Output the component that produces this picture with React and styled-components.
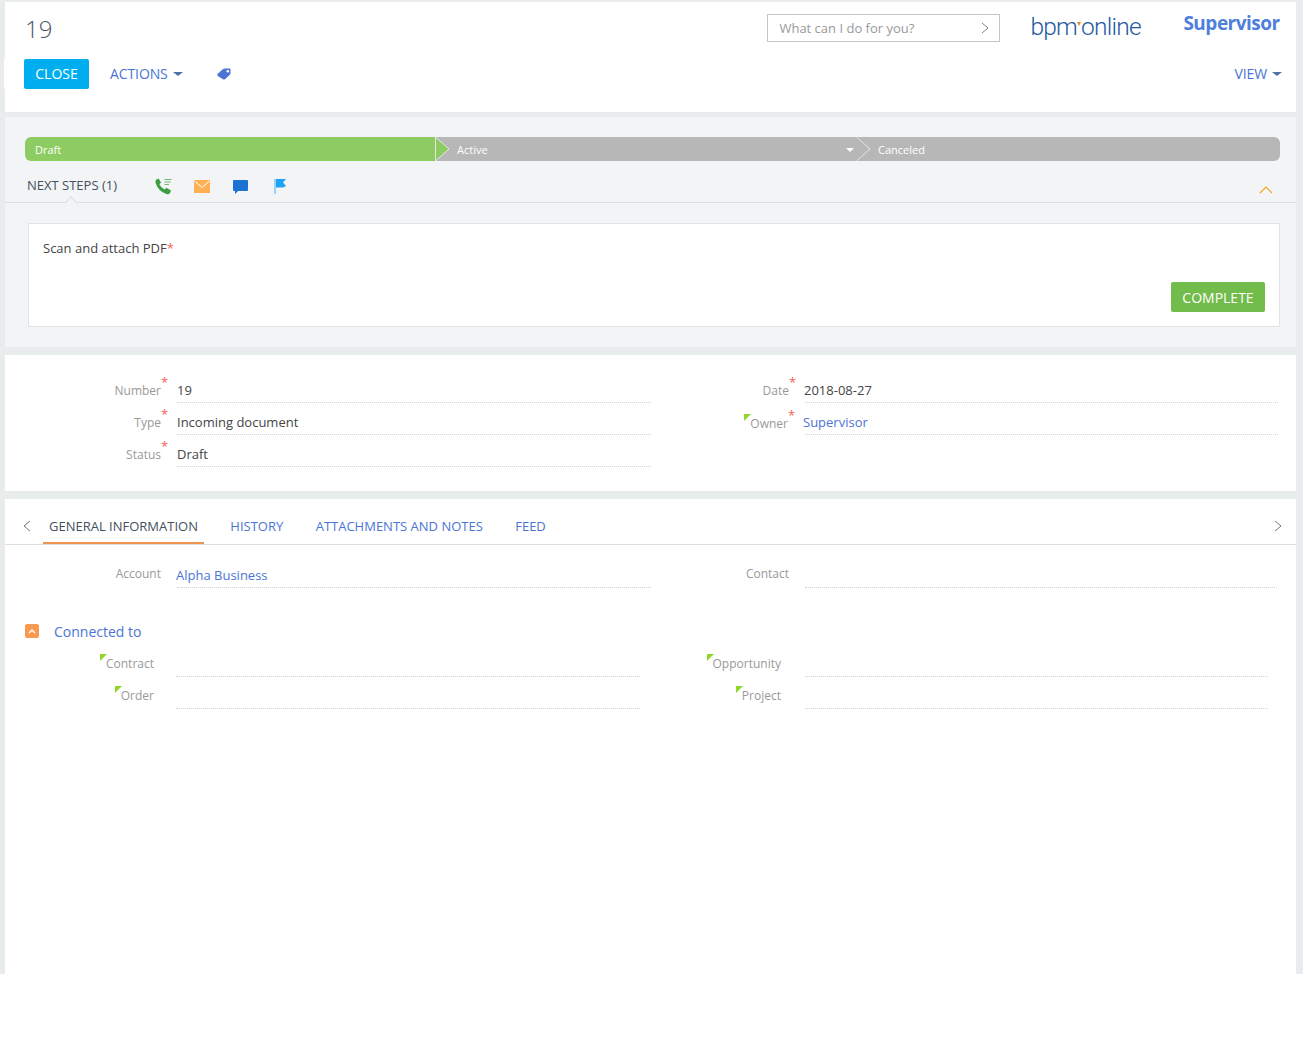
import styled, { createGlobalStyle } from 'styled-components'

const GlobalStyle = createGlobalStyle`
  html, body {
    margin: 0;
    padding: 0;
    background: #fff;
    font-family: "Open Sans", "Liberation Sans", sans-serif;
  }
`

const STAGES = [
  { name: 'Draft', width: 410, done: true },
  { name: 'Active', width: 421, menu: true },
  { name: 'Canceled', width: 424 },
]

const TABS = ['GENERAL INFORMATION', 'HISTORY', 'ATTACHMENTS AND NOTES', 'FEED']

function Chevron({ dir = 'right', color = '#777', size = 12, weight = 1 }) {
  const points = {
    right: '3,1 9,6 3,11',
    left: '9,1 3,6 9,11',
    up: '1,8 7,2 13,8',
  }[dir]
  return (
    <svg width={dir === 'up' ? 14 : size} height={size} viewBox={`0 0 ${dir === 'up' ? 14 : 12} 12`}>
      <polyline points={points} fill="none" stroke={color} strokeWidth={weight} />
    </svg>
  )
}

function StageArrow({ done }) {
  return (
    <ArrowSvg width="15" height="24" viewBox="0 0 15 24">
      {done && <polygon points="0,0 14,12 0,24" fill="#8ccc62" />}
      {done && <line x1="0.5" y1="0" x2="0.5" y2="24" stroke="#e6e6e6" />}
      <polyline points="0.5,0 14,12 0.5,24" fill="none" stroke="#e6e6e6" />
    </ArrowSvg>
  )
}

function TagIcon() {
  return (
    <svg width="14" height="12" viewBox="0 0 14 12">
      <path d="M0.5 6 L5.5 1.5 Q6.5 0.5 8 0.5 L12.5 0.5 Q13.5 0.5 13.5 1.5 L13.5 5 Q13.5 6 12.8 6.8 L8 11.2 Q7 12 6 11.2 L0.8 8 Q0 7 0.5 6 Z" fill="#4b74d4" />
      <circle cx="10.8" cy="3.2" r="1.3" fill="#fff" />
    </svg>
  )
}

function PhoneIcon() {
  return (
    <svg width="17" height="17" viewBox="0 0 17 17">
      <path d="M1 1.8 L3.6 0.6 L6 4.6 L4.4 6.2 Q5.8 9.6 9.6 11.4 L11.4 9.8 L16 12.6 L14.8 15.4 Q13.6 16.6 11.4 16 Q3.4 13.4 0.6 5 Q0.2 3 1 1.8 Z" fill="#3d9e3f" />
      <path d="M9.5 1.5 H16.5 M9.5 4 H15.5 M9.5 6.5 H14" stroke="#6dbb6e" strokeWidth="1" />
    </svg>
  )
}

function MailIcon() {
  return (
    <svg width="16" height="13" viewBox="0 0 16 13">
      <rect width="16" height="13" fill="#ffb053" />
      <polyline points="0.5,1 8,7.5 15.5,1" fill="none" stroke="#fff" strokeWidth="1" />
    </svg>
  )
}

function ChatIcon() {
  return (
    <svg width="15" height="14" viewBox="0 0 15 14">
      <path d="M1 0 H14 Q15 0 15 1 V10 Q15 11 14 11 H5 L2 14 V11 H1 Q0 11 0 10 V1 Q0 0 1 0 Z" fill="#1a73d3" />
    </svg>
  )
}

function FlagIcon() {
  return (
    <svg width="12" height="15" viewBox="0 0 12 15">
      <rect width="2" height="15" fill="#9ad2fb" />
      <path d="M2 0 H12 L9 3.5 L12 7 L9 8.5 H2 Z" fill="#1ea3f6" />
    </svg>
  )
}

function Field({ label, value, link, required, locked, labelWidth, valueWidth, labelTop = 6, labelGap = 16, indent = 0 }) {
  return (
    <FieldRow>
      <FieldLabel $width={labelWidth} $top={labelTop} $gap={labelGap}>
        <LabelText $locked={locked}>
          {label}
          {required && <Required>*</Required>}
        </LabelText>
      </FieldLabel>
      <FieldValue $width={valueWidth} $link={link} $indent={indent}>{value}</FieldValue>
    </FieldRow>
  )
}

export default function App() {
  return (
    <>
      <GlobalStyle />
      <Page>
        <Header>
          <TopRow>
            <Title>19</Title>
            <CommandBox>
              <span>What can I do for you?</span>
              <Chevron color="#808080" />
            </CommandBox>
            <Logo>
              bpm<LogoMark />online
            </Logo>
            <UserName>Supervisor</UserName>
          </TopRow>
          <ActionRow>
            <CloseButton>CLOSE</CloseButton>
            <MenuLink>ACTIONS<Caret /></MenuLink>
            <TagButton><TagIcon /></TagButton>
            <ViewLink>VIEW<Caret /></ViewLink>
          </ActionRow>
        </Header>

        <ProcessPanel>
          <StageBar>
            {STAGES.map((stage, i) => (
              <Stage key={stage.name} $width={stage.width} $done={stage.done}>
                {i > 0 && <StageArrow done={STAGES[i - 1].done} />}
                <StageName $first={i === 0}>{stage.name}</StageName>
                {stage.menu && <StageCaret />}
              </Stage>
            ))}
          </StageBar>
          <StepsBar>
            <StepsTitle>NEXT STEPS (1)</StepsTitle>
            <StepIcons>
              <StepIcon $gap={0}><PhoneIcon /></StepIcon>
              <StepIcon $gap={22}><MailIcon /></StepIcon>
              <StepIcon $gap={23}><ChatIcon /></StepIcon>
              <StepIcon $gap={26}><FlagIcon /></StepIcon>
            </StepIcons>
            <Collapse><Chevron dir="up" color="#f5a623" weight={1.2} /></Collapse>
            <Notch />
          </StepsBar>
          <StepCard>
            <StepText>Scan and attach PDF<StepStar>*</StepStar></StepText>
            <CompleteButton>COMPLETE</CompleteButton>
          </StepCard>
        </ProcessPanel>

        <FormPanel>
          <FormColumn $width={646}>
            <Field label="Number" value="19" required labelWidth={156} valueWidth={474} />
            <Field label="Type" value="Incoming document" required labelWidth={156} valueWidth={474} />
            <Field label="Status" value="Draft" required labelWidth={156} valueWidth={474} />
          </FormColumn>
          <FormColumn $width={640}>
            <Field label="Date" value="2018-08-27" required labelWidth={138} valueWidth={473} indent={-1} />
            <Field label="Owner" value="Supervisor" link required locked labelWidth={137} labelGap={17} valueWidth={473} labelTop={7} indent={-2} />
          </FormColumn>
        </FormPanel>

        <TabsPanel>
          <TabBar>
            <TabArrow><Chevron dir="left" /></TabArrow>
            <TabList>
              {TABS.map((tab, i) => (
                <Tab key={tab} $active={i === 0}>{tab}</Tab>
              ))}
            </TabList>
            <TabArrow><Chevron /></TabArrow>
          </TabBar>

          <AccountRow>
            <FormColumn $width={646}>
              <Field label="Account" value="Alpha Business" link labelWidth={156} valueWidth={474} labelTop={4} indent={-1} />
            </FormColumn>
            <FormColumn $width={640}>
              <Field label="Contact" labelWidth={138} valueWidth={472} labelTop={4} />
            </FormColumn>
          </AccountRow>

          <GroupHeader>
            <GroupToggle>
              <svg width="8" height="5" viewBox="0 0 8 5">
                <polyline points="1,4 4,1 7,4" fill="none" stroke="#fff" strokeWidth="1.4" />
              </svg>
            </GroupToggle>
            <GroupTitle>Connected to</GroupTitle>
          </GroupHeader>

          <GroupFields>
            <FormColumn $width={646}>
              <Field label="Contract" locked labelWidth={149} labelGap={22} valueWidth={464} labelTop={5} />
              <Field label="Order" locked labelWidth={149} labelGap={22} valueWidth={464} labelTop={5} />
            </FormColumn>
            <FormColumn $width={640}>
              <Field label="Opportunity" locked labelWidth={130} labelGap={24} valueWidth={463} labelTop={5} />
              <Field label="Project" locked labelWidth={130} labelGap={24} valueWidth={463} labelTop={5} />
            </FormColumn>
          </GroupFields>
        </TabsPanel>
      </Page>
    </>
  )
}

const Page = styled.div`
  width: 1303px;
  height: 974px;
  box-sizing: border-box;
  padding: 2px 7px 0 5px;
  background: #e9eced;
  display: flex;
  flex-direction: column;
  overflow: hidden;
`

const Header = styled.header`
  height: 110px;
  flex: none;
  background: #fff;
`

const TopRow = styled.div`
  height: 57px;
  display: flex;
  align-items: flex-start;
`

const Title = styled.h1`
  margin: 10px 0 0 20px;
  font-size: 24px;
  line-height: 34px;
  font-weight: 300;
  color: #4a5568;
`

const CommandBox = styled.div`
  width: 233px;
  height: 28px;
  box-sizing: border-box;
  margin: 12px 0 0 715px;
  padding: 0 8px 0 11px;
  border: 1px solid #c6c6c6;
  display: flex;
  align-items: center;
  justify-content: space-between;
  font-size: 13px;
  color: #999;
`

const Logo = styled.div`
  margin: 9px 0 0 30px;
  width: 115px;
  display: flex;
  align-items: flex-start;
  font-family: Roboto, "Open Sans", sans-serif;
  font-size: 24.5px;
  line-height: 32px;
  font-weight: 300;
  letter-spacing: -0.75px;
  color: #1f5a9e;
`

const LogoMark = styled.i`
  width: 0;
  height: 0;
  margin: 11px 0 0 0;
  border-style: solid;
  border-width: 4px 2px 0;
  border-color: #f58220 transparent transparent;
`

const UserName = styled.div`
  margin: 6px 0 0 38px;
  font-size: 19px;
  line-height: 30px;
  font-weight: 700;
  letter-spacing: -0.5px;
  color: #4f7fdc;
`

const ActionRow = styled.div`
  height: 30px;
  margin-left: -1px;
  padding: 0 14px 0 20px;
  background: #fff;
  display: flex;
  align-items: center;
  font-size: 14px;
`

const CloseButton = styled.button`
  width: 65px;
  height: 30px;
  padding: 0 0 2px;
  border: 0;
  border-radius: 2px;
  background: #00aeef;
  color: #fff;
  font: inherit;
`

const MenuLink = styled.span`
  margin: -2px 0 0 21px;
  letter-spacing: -0.1px;
  color: #4b74d4;
  display: flex;
  align-items: center;
`

const ViewLink = styled(MenuLink)`
  margin-left: auto;
`

const Caret = styled.i`
  margin: 1px 0 0 5px;
  width: 0;
  height: 0;
  border-style: solid;
  border-width: 4px 5px 0;
  border-color: #4f6fa8 transparent transparent;
`

const TagButton = styled.span`
  margin-left: 34px;
  display: flex;
`

const ProcessPanel = styled.section`
  height: 230px;
  flex: none;
  margin-top: 5px;
  padding-top: 20px;
  box-sizing: border-box;
  background: #f2f4f6;
`

const StageBar = styled.div`
  margin-left: 20px;
  width: 1255px;
  height: 24px;
  border-radius: 6px;
  overflow: hidden;
  display: flex;
`

const Stage = styled.div`
  position: relative;
  width: ${(p) => p.$width}px;
  flex: none;
  display: flex;
  align-items: center;
  background: ${(p) => (p.$done ? '#8ccc62' : '#b7b7b7')};
`

const StageName = styled.span`
  margin-left: ${(p) => (p.$first ? 10 : 22)}px;
  font-size: 11px;
  color: #fff;
`

const ArrowSvg = styled.svg`
  position: absolute;
  left: 0;
  top: 0;
`

const StageCaret = styled.i`
  position: absolute;
  right: 2px;
  top: 11px;
  width: 0;
  height: 0;
  border-style: solid;
  border-width: 4px 4px 0;
  border-color: #fff transparent transparent;
`

const StepsBar = styled.div`
  position: relative;
  height: 42px;
  box-sizing: border-box;
  border-bottom: 1px solid #dcdee1;
  padding: 9px 22px 0;
  display: flex;
  align-items: flex-start;
`

const StepsTitle = styled.span`
  width: 128px;
  font-size: 13px;
  line-height: 30px;
  color: #44505e;
`

const StepIcons = styled.div`
  margin-top: 8px;
  display: flex;
  align-items: center;
`

const StepIcon = styled.span`
  margin-left: ${(p) => p.$gap}px;
  display: flex;
`

const Collapse = styled.span`
  margin: 15px 1px 0 auto;
  display: flex;
`

const Notch = styled.i`
  position: absolute;
  left: 62px;
  bottom: -4px;
  width: 7px;
  height: 7px;
  background: #f2f4f6;
  border-top: 1px solid #dcdee1;
  border-left: 1px solid #dcdee1;
  transform: rotate(45deg);
`

const StepCard = styled.div`
  margin: 20px 0 0 23px;
  width: 1252px;
  height: 104px;
  box-sizing: border-box;
  padding: 14px 14px 14px;
  border: 1px solid #e0e2e4;
  background: #fff;
  display: flex;
  flex-direction: column;
  justify-content: space-between;
  align-items: flex-start;
`

const StepText = styled.div`
  font-size: 13px;
  line-height: 20px;
  color: #444;
`

const StepStar = styled.span`
  color: #f2645a;
`

const CompleteButton = styled.button`
  align-self: flex-end;
  width: 94px;
  height: 30px;
  padding: 0;
  border: 0;
  border-radius: 2px;
  background: #72bc4b;
  color: #fff;
  font-family: inherit;
  font-size: 14px;
`

const FormPanel = styled.section`
  height: 136px;
  flex: none;
  margin-top: 8px;
  box-sizing: border-box;
  padding-top: 20px;
  background: #fff;
  display: flex;
  align-items: flex-start;
`

const FormColumn = styled.div`
  width: ${(p) => p.$width}px;
  flex: none;
`

const FieldRow = styled.div`
  height: 32px;
  display: flex;
`

const FieldLabel = styled.div`
  width: ${(p) => p.$width}px;
  flex: none;
  margin-right: ${(p) => p.$gap}px;
  padding-top: ${(p) => p.$top}px;
  box-sizing: border-box;
  text-align: right;
  font-size: 12px;
  line-height: 20px;
  color: #999;
`

const LabelText = styled.span`
  position: relative;
  ${(p) =>
    p.$locked &&
    `&::before {
      content: '';
      position: absolute;
      left: -6px;
      top: -1px;
      border-style: solid;
      border-width: 7px 7px 0 0;
      border-color: #8fd72b transparent transparent;
    }`}
`

const Required = styled.span`
  position: absolute;
  left: 100%;
  top: -10px;
  color: #f2645a;
  font-size: 13px;
`

const FieldValue = styled.div`
  width: ${(p) => p.$width}px;
  height: 28px;
  box-sizing: border-box;
  padding-top: 4px;
  border-bottom: 1px dotted #d4d4d4;
  font-size: 13px;
  line-height: 22px;
  text-indent: ${(p) => p.$indent}px;
  color: ${(p) => (p.$link ? '#4b74d4' : '#444')};
`

const TabsPanel = styled.section`
  flex: 1;
  margin-top: 8px;
  background: #fff;
`

const TabBar = styled.div`
  height: 46px;
  box-sizing: border-box;
  border-bottom: 1px solid #dcdee1;
  padding: 14px 12px 0 16px;
  display: flex;
  align-items: flex-start;
`

const TabArrow = styled.span`
  margin-top: 7px;
  display: flex;
`

const TabList = styled.div`
  flex: 1;
  margin-left: 10px;
  display: flex;
  gap: 20.4px;
`

const Tab = styled.div`
  height: 31px;
  box-sizing: border-box;
  padding: 3px 6px 0;
  font-size: 13px;
  line-height: 20px;
  white-space: nowrap;
  color: ${(p) => (p.$active ? '#44505e' : '#4b74d4')};
  border-bottom: 2px solid ${(p) => (p.$active ? '#f0954f' : 'transparent')};
`

const AccountRow = styled.div`
  display: flex;
  padding-top: 15px;
`

const GroupHeader = styled.div`
  margin: 30px 0 0 20px;
  height: 18px;
  display: flex;
  align-items: center;
`

const GroupToggle = styled.span`
  width: 14px;
  height: 14px;
  border-radius: 2px;
  background: #f8994f;
  display: flex;
  align-items: center;
  justify-content: center;
`

const GroupTitle = styled.span`
  margin: 1px 0 0 15px;
  font-size: 14px;
  color: #4b74d4;
`

const GroupFields = styled.div`
  display: flex;
  padding-top: 9px;
`
